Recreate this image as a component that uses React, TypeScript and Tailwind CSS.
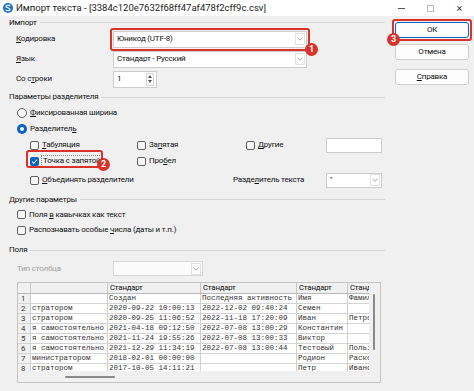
import type { ReactNode } from "react";

const rows = [
  ["1", "", "Создан", "Последняя активность", "Имя", "Фамилия"],
  ["2", "стратором", "2020-09-22 10:00:13", "2022-12-02 09:40:24", "Семен", ""],
  ["3", "стратором", "2020-09-25 11:06:52", "2022-11-18 17:20:09", "Иван", "Петров"],
  ["4", "я самостоятельно", "2021-04-18 09:12:50", "2022-07-08 13:00:29", "Константин", ""],
  ["5", "я самостоятельно", "2021-11-24 19:55:26", "2022-07-08 13:00:33", "Виктор", ""],
  ["6", "я самостоятельно", "2021-12-29 11:34:19", "2022-07-08 13:00:44", "Тестовый", "Пользователь"],
  ["7", "министратором", "2018-02-01 00:00:00", "", "Родион", "Раскольников"],
  ["8", "стратором", "2017-10-05 14:11:21", "", "Петр", "Иванов"],
];

const colWidths = ["w-[13px]", "w-[77px]", "w-[93px]", "w-[96px]", "w-[51px]", "w-[22px]"];

function Badge({ n, className }: { n: string; className: string }) {
  return (
    <div
      className={`absolute z-10 w-[13px] h-[13px] rounded-full bg-[#d8322b] text-white text-[9px] font-bold flex items-center justify-center leading-none tracking-normal ${className}`}
    >
      {n}
    </div>
  );
}

function Group({ title, className }: { title: string; className: string }) {
  return (
    <div className={`flex items-center gap-[3px] ${className}`}>
      <span>{title}</span>
      <div className="flex-1 h-px bg-[#d6d6d6]" />
    </div>
  );
}

function Check({ checked }: { checked?: boolean }) {
  if (checked) {
    return (
      <div className="w-[9px] h-[9px] shrink-0 rounded-[2px] bg-[#0a64c8] flex items-center justify-center">
        <svg width="7" height="7" viewBox="0 0 8 8">
          <path d="M1.3 4.2 L3.2 6 L6.8 2" stroke="white" strokeWidth="1.2" fill="none" />
        </svg>
      </div>
    );
  }
  return <div className="w-[9px] h-[9px] shrink-0 rounded-[2px] border border-[#5f5f5f] bg-[#f7f7f7]" />;
}

function Radio({ checked }: { checked?: boolean }) {
  if (checked) {
    return (
      <div className="w-[10px] h-[10px] shrink-0 rounded-full bg-[#0a64c8] flex items-center justify-center">
        <div className="w-[4px] h-[4px] rounded-full bg-white" />
      </div>
    );
  }
  return <div className="w-[10px] h-[10px] shrink-0 rounded-full border border-[#5f5f5f] bg-[#f7f7f7]" />;
}

function Chevron() {
  return (
    <div className="w-[10px] h-[12px] mr-px border border-[#e2e2e2] flex items-center justify-center">
      <svg width="6" height="4" viewBox="0 0 6 4">
        <path d="M0.5 0.8 L3 3.2 L5.5 0.8" stroke="#9a9a9a" strokeWidth="0.9" fill="none" />
      </svg>
    </div>
  );
}

function Select({ value, className }: { value?: string; className: string }) {
  return (
    <div className={`bg-white border border-[#cdcdcd] flex items-center ${className}`}>
      <span className="flex-1 pl-[3px] whitespace-nowrap">{value}</span>
      <Chevron />
    </div>
  );
}

function Item({ children, checked, className }: { children: ReactNode; checked?: boolean; className: string }) {
  return (
    <div className={`flex items-center gap-[3px] ${className}`}>
      <Check checked={checked} />
      <span className="whitespace-nowrap">{children}</span>
    </div>
  );
}

function Button({ children }: { children: ReactNode }) {
  return (
    <div className="w-[74px] h-[16px] bg-[#fdfdfd] border border-[#d0d0d0] rounded-[3px] flex items-center justify-center">
      {children}
    </div>
  );
}

export default function App() {
  return (
    <div className="w-[474px] h-[391px] bg-[#f0f0f0] text-[8px] tracking-[-0.2px] text-[#111] font-['Roboto',sans-serif] overflow-hidden flex flex-col">
      {/* title bar */}
      <div className="h-[16px] bg-white flex items-center shrink-0 tracking-normal">
        <svg className="ml-[3px]" width="10" height="10" viewBox="0 0 10 10">
          <circle cx="5" cy="5" r="5" fill="#1b72c6" />
          <path d="M7.2 3 C6 1.8 2.8 2 3 3.6 C3.2 5 6.9 4.6 7 6.3 C7.1 8 3.8 8 2.7 6.9" stroke="white" strokeWidth="1.2" fill="none" />
        </svg>
        <span className="ml-[3px] text-[9.5px] text-[#222]">Импорт текста - [3384c120e7632f68ff47af478f2cff9c.csv]</span>
        <div className="ml-auto flex items-center text-[#444]">
          <div className="w-[29px] flex justify-center">
            <div className="w-[7px] h-px bg-[#555]" />
          </div>
          <div className="w-[29px] flex justify-center">
            <div className="w-[7px] h-[7px] border border-[#bbb]" />
          </div>
          <div className="w-[29px] flex justify-center text-[11px] leading-none">×</div>
        </div>
      </div>

      <div className="flex flex-1">
        {/* left panel */}
        <div className="w-[376px] ml-[9px] flex flex-col">
          <Group title="Импорт" className="h-[13px]" />
          <div className="h-[20px] flex items-center">
            <span className="w-[104px] pl-[7px]">
              <u>К</u>одировка
            </span>
            <div className="relative">
              <Select value="Юникод (UTF-8)" className="w-[194px] h-[17px]" />
              <div className="absolute -inset-[3px] border-2 border-[#d8322b] rounded-[3px]" />
              <Badge n="1" className="left-[192px] top-[12px]" />
            </div>
          </div>
          <div className="h-[20px] flex items-center">
            <span className="w-[104px] pl-[7px]">
              <u>Я</u>зык
            </span>
            <Select value="Стандарт - Русский" className="w-[194px] h-[17px]" />
          </div>
          <div className="h-[20px] flex items-center">
            <span className="w-[104px] pl-[7px]">
              Со с<u>т</u>роки
            </span>
            <div className="w-[44px] h-[17px] bg-white border border-[#cdcdcd] flex items-center">
              <span className="flex-1 pl-[3px]">1</span>
              <div className="w-[8px] h-[13px] mr-[2px] border border-[#d5d5d5] flex flex-col items-center justify-around">
                <svg width="4" height="3" viewBox="0 0 4 3">
                  <path d="M0 3 L2 0 L4 3 Z" fill="#555" />
                </svg>
                <svg width="4" height="3" viewBox="0 0 4 3">
                  <path d="M0 0 L2 3 L4 0 Z" fill="#555" />
                </svg>
              </div>
            </div>
          </div>

          <Group title="Параметры разделителя" className="h-[16px]" />
          <div className="h-[15px] flex items-center gap-[3px] pl-[8px]">
            <Radio />
            <span>
              <u>Ф</u>иксированная ширина
            </span>
          </div>
          <div className="h-[17px] flex items-center gap-[3px] pl-[8px]">
            <Radio checked />
            <span>
              Разделител<u>ь</u>
            </span>
          </div>
          <div className="h-[16px] flex items-center pl-[21px]">
            <Item className="w-[107px]">
              <u>Т</u>абуляция
            </Item>
            <Item className="w-[109px]">
              За<u>п</u>ятая
            </Item>
            <Item className="w-[80px]">
              <u>Д</u>ругие
            </Item>
            <div className="w-[56px] h-[15px] bg-white border border-[#cdcdcd]" />
          </div>
          <div className="h-[16px] flex items-center pl-[21px]">
            <div className="relative w-[107px] flex items-center gap-[2px]">
              <Check checked />
              <span className="whitespace-nowrap border border-dotted border-[#888] px-px leading-[10px]">Точка с запятой</span>
              <div className="absolute left-[-4px] top-[-5px] w-[77px] h-[18px] border-2 border-[#d8322b] rounded-[3px]" />
              <Badge n="2" className="left-[67px] top-[3px]" />
            </div>
            <Item className="w-[109px]">
              Про<u>б</u>ел
            </Item>
          </div>
          <div className="h-[22px] flex items-center pl-[21px]">
            <Item className="w-[203px]">
              <u>О</u>бъединять разделители
            </Item>
            <span className="w-[93px] whitespace-nowrap">
              Разде<u>л</u>итель текста
            </span>
            <Select value={'"'} className="w-[56px] h-[15px]" />
          </div>

          <Group title="Другие параметры" className="h-[17px]" />
          <Item className="h-[13px] pl-[8px]">
            Поля <u>в</u> кавычках как текст
          </Item>
          <Item className="h-[18px] pl-[8px]">
            Распознавать особые <u>ч</u>исла (даты и т.п.)
          </Item>

          <Group title="Поля" className="h-[22px]" />
          <div className="h-[15px] flex items-center">
            <span className="w-[104px] pl-[8px] text-[#a0a0a0]">Тип столбца</span>
            <div className="w-[90px] h-[15px] bg-[#fbfbfb] border border-[#d8d8d8] flex items-center justify-end">
              <Chevron />
            </div>
          </div>

          {/* preview table */}
          <div className="mt-[6px] ml-[8px] w-[364px] h-[101px] border border-[#c4c4c4] bg-[#f0f0f0] flex flex-col">
            <div className="flex h-[88px]">
              <div className="w-[351px] overflow-hidden flex flex-col">
                <div className="h-[11px] flex shrink-0 bg-[#f0f0f0] border-b border-[#b8b8b8] text-[7.8px] leading-none">
                  {["", "", "Стандарт", "Стандарт", "Стандарт", "Стандарт"].map((h, i) => (
                    <div
                      key={i}
                      className={`${colWidths[i]} shrink-0 border-r border-[#c8c8c8] pl-[2px] flex items-center overflow-hidden whitespace-nowrap`}
                    >
                      {h}
                    </div>
                  ))}
                </div>
                {rows.map((r) => (
                  <div
                    key={r[0]}
                    className="h-[10px] flex shrink-0 border-b border-[#d4d4d4] font-['Liberation_Mono',monospace] text-[7.5px] tracking-normal leading-none text-[#333]"
                  >
                    {r.map((c, i) => (
                      <div
                        key={i}
                        className={`${colWidths[i]} shrink-0 border-r border-[#cfcfcf] flex items-center overflow-hidden whitespace-nowrap ${
                          i === 0 ? "bg-[#f0f0f0] pl-[3px] font-['Roboto',sans-serif] text-[7.8px]" : "bg-white pl-px"
                        }`}
                      >
                        {c}
                      </div>
                    ))}
                  </div>
                ))}
              </div>
              <div className="w-[11px] bg-[#f0f0f0]">
                <div className="mt-[11px] ml-[4px] w-[2px] h-[56px] rounded-full bg-[#8a8a8a]" />
              </div>
            </div>
            <div className="h-[11px] flex items-center">
              <div className="ml-[47px] w-[50px] h-[2px] rounded-full bg-[#8a8a8a]" />
            </div>
          </div>
        </div>

        {/* buttons */}
        <div className="ml-[10px] flex flex-col">
          <div className="relative mt-[6px]">
            <div className="w-[74px] h-[16px] bg-[#fdfdfd] border border-[#0067c0] rounded-[3px] flex items-center justify-center">
              ОК
            </div>
            <div className="absolute -inset-[3px] border-2 border-[#d8322b] rounded-[3px]" />
            <Badge n="3" className="left-[-8px] top-[11px]" />
          </div>
          <div className="mt-[6px]">
            <Button>Отмена</Button>
          </div>
          <div className="mt-[9px]">
            <Button>
              <span>
                <u>С</u>правка
              </span>
            </Button>
          </div>
        </div>
      </div>
    </div>
  );
}
